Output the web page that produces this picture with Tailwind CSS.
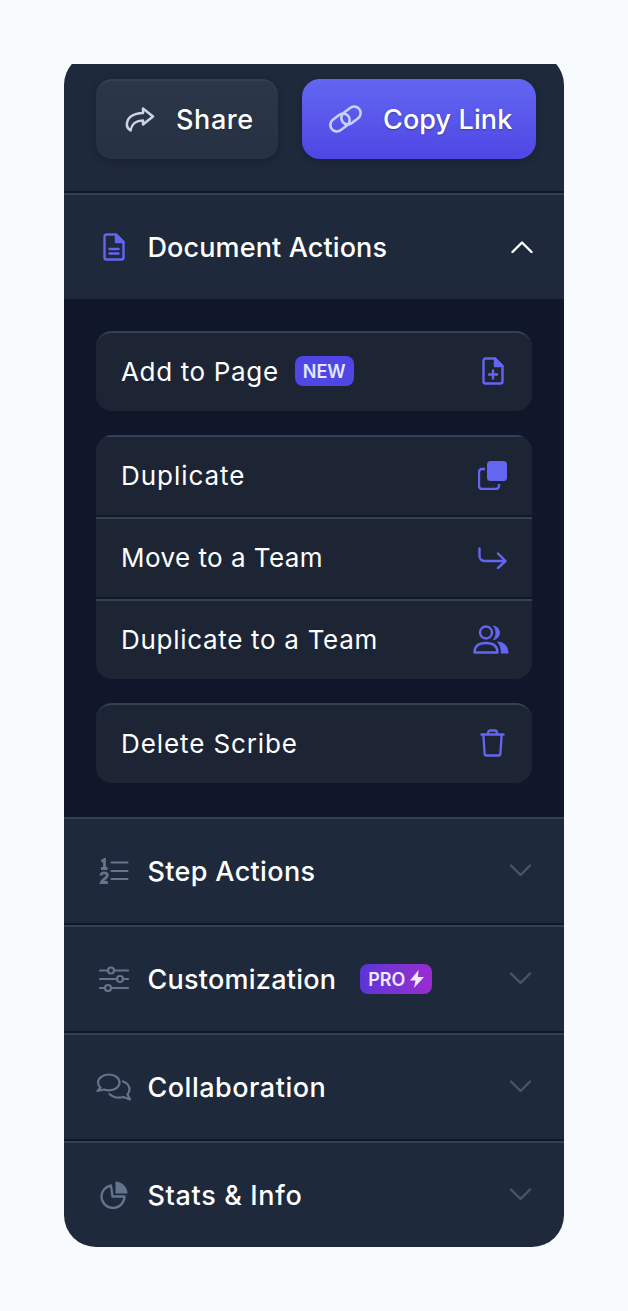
<!DOCTYPE html>
<html>
<head>
<meta charset="utf-8">
<script src="https://cdn.jsdelivr.net/npm/@tailwindcss/browser@4"></script>
</head>
<body class="bg-[#f7fbfe] font-['Inter',sans-serif] text-white antialiased">
<div class="pt-16 pb-16 px-16 h-[1311px]">
  <div class="h-[1183px] overflow-hidden">
    <div class="-mt-[11px] rounded-[32px] bg-[#1e293b] overflow-hidden w-[500px]">
      <div class="h-[138px] pt-[26px] pl-8 pr-7 flex items-start gap-6">
        <button class="w-[182px] h-20 rounded-2xl bg-gradient-to-b from-[#2b3749] to-[#263244] border-t-2 border-[#334155] shadow-[0_2px_6px_rgba(15,23,42,0.5)] flex items-center pl-[29px] gap-[21px] text-[27px] font-medium tracking-[0.6px]">
          <svg class="w-[30px] h-[30px] text-[#cbd5e1]" viewBox="0 0 30 30" fill="none" stroke="currentColor" stroke-width="2.500" stroke-linecap="round" stroke-linejoin="round"><path d="M18 3.500 28 11.500 18 19.500V15.500C11 15.500 7 18 5.500 25.500 3 24 1.500 21 2 18 3 12 9 8.500 18 8z"/></svg>
          <span class="[text-shadow:0_1px_2px_rgba(0,0,0,.3)]">Share</span>
        </button>
        <button class="w-[234px] h-20 rounded-[18px] bg-gradient-to-b from-[#6366f1] to-[#4f46e5] shadow-[0_2px_6px_rgba(15,23,42,0.5)] flex items-center pl-[26px] gap-[20px] text-[27px] font-medium tracking-[0.1px]">
          <svg class="w-[35px] h-[30px] text-[#c7d2fe]" viewBox="0 0 35 30" fill="none" stroke="currentColor" stroke-width="2.600" stroke-linecap="round" stroke-linejoin="round"><rect x="1.500" y="12" width="21" height="13" rx="6.500" transform="rotate(-38 12 18.500)"/><rect x="12.500" y="5" width="21" height="13" rx="6.500" transform="rotate(-38 23 11.500)"/></svg>
          <span class="pt-[2px] [text-shadow:0_1px_2px_rgba(0,0,0,.3)]">Copy Link</span>
        </button>
      </div>

      <div class="border-t-2 border-[#0f172a]"><div class="border-t-2 border-[#334155]">
        <div class="h-[104px] flex items-center pl-[39px] pr-[31px] text-[27px] font-medium tracking-[0.12px]">
          <svg class="w-[22px] h-[28px] text-[#6366f1] mr-[22.500px]" viewBox="0 0 22 28" fill="none" stroke="currentColor" stroke-width="2.400" stroke-linejoin="round" stroke-linecap="round"><path d="M13 1.500H3.500a2 2 0 0 0-2 2v21a2 2 0 0 0 2 2h15a2 2 0 0 0 2-2V9z"/><path d="M13 1.500V9h7.500z" fill="currentColor"/><path d="M6.500 16h9M6.500 20.500h9"/></svg>
          <span class="flex-1 pt-[2px]">Document Actions</span>
          <svg class="w-[22px] h-[12px] text-white" viewBox="0 0 22 12" fill="none" stroke="currentColor" stroke-width="2.400" stroke-linecap="round" stroke-linejoin="round"><path d="M1.500 11L11 1.500 20.500 11"/></svg>
        </div>
      </div></div>

      <div class="bg-[#10172a] h-[518px] pt-8 pl-8 pr-8 flex flex-col gap-6 text-[26px] tracking-[0.65px]">
        <div class="h-20 rounded-2xl bg-[#1d2535] border-t-2 border-[#334155] flex items-center pl-[25px] pr-[28px] pb-[2px]">
          <span>Add to Page</span>
          <span class="ml-4 w-[59px] h-[30px] rounded-lg bg-[#4f46e5] text-[#e0e7ff] text-[18px] font-semibold tracking-normal flex items-center justify-center">NEW</span>
          <svg class="ml-auto w-[22px] h-[28px] text-[#6366f1]" viewBox="0 0 22 28" fill="none" stroke="currentColor" stroke-width="2.400" stroke-linejoin="round" stroke-linecap="round"><path d="M13 1.500H3.500a2 2 0 0 0-2 2v21a2 2 0 0 0 2 2h15a2 2 0 0 0 2-2V9z"/><path d="M13 1.500V9h7.500z" fill="currentColor"/><path d="M11 13.500v8M7 17.500h8"/></svg>
        </div>
        <div class="rounded-2xl bg-[#1d2535] overflow-hidden">
          <div class="h-20 border-t-2 border-[#334155] flex items-center pl-[25px] pr-[25px] pb-[1px]">
            <span class="tracking-[0.95px]">Duplicate</span>
            <svg class="ml-auto w-[29px] h-[29px] text-[#6366f1]" viewBox="0 0 29 29" fill="none"><rect x="9" y="0" width="20" height="20" rx="3.500" fill="currentColor"/><path d="M7 8H4a3 3 0 0 0-3 3v14a3 3 0 0 0 3 3h14a3 3 0 0 0 3-3v-2" stroke="currentColor" stroke-width="2.400"/></svg>
          </div>
          <div class="h-[82px] border-t-2 border-[#0f172a]"><div class="h-full border-t-2 border-[#334155] flex items-center pl-[25px] pr-[25px] pb-[1px]">
            <span class="tracking-[0.45px]">Move to a Team</span>
            <svg class="ml-auto w-[29px] h-[22px] text-[#6366f1]" viewBox="0 0 29 22" fill="none" stroke="currentColor" stroke-width="2.400" stroke-linecap="round" stroke-linejoin="round"><path d="M1.500 1.500V9a5 5 0 0 0 5 5h21M20 6.500l7.500 7.500-7.500 7"/></svg>
          </div></div>
          <div class="h-[82px] border-t-2 border-[#0f172a]"><div class="h-full border-t-2 border-[#334155] flex items-center pl-[25px] pr-[23px] pb-[1px]">
            <span class="tracking-[0.7px]">Duplicate to a Team</span>
            <svg class="ml-auto w-[36px] h-[29px] text-[#6366f1]" viewBox="0 0 36 29" fill="none"><circle cx="13" cy="7.500" r="6" stroke="currentColor" stroke-width="2.400"/><path d="M1.500 27.500C1.500 21 6 18 13 18s11.500 3 11.500 9.500z" stroke="currentColor" stroke-width="2.400" stroke-linejoin="round"/><path d="M20.500 1a6.800 6.800 0 0 1 0 13.500c1.800-2 2.500-4 2.500-6.700S22.300 3 20.500 1z" fill="currentColor" stroke="currentColor"/><path d="M24 16.500c6.500 0 11.500 4 11.500 12H28c0-5-1.500-9-4-12z" fill="currentColor"/></svg>
          </div></div>
        </div>
        <div class="h-20 rounded-2xl bg-[#1d2535] border-t-2 border-[#334155] flex items-center pl-[25px] pr-[27px] pb-[2px]">
          <span class="tracking-[0.9px]">Delete Scribe</span>
          <svg class="ml-auto w-[25px] h-[28px] text-[#6366f1]" viewBox="0 0 26 28" fill="none" preserveAspectRatio="none" stroke="currentColor" stroke-width="2.400" stroke-linecap="round" stroke-linejoin="round"><path d="M1.500 5.500h23M8.500 5V3.500a2 2 0 0 1 2-2h5a2 2 0 0 1 2 2V5M3.500 6l1.300 18.500a2 2 0 0 0 2 2h12.400a2 2 0 0 0 2-2L22.500 6"/></svg>
        </div>
      </div>

      <div class="border-t-2 border-[#334155]">
        <div class="h-[104px] flex items-center pl-[35px] pr-[32px] text-[27px] font-medium tracking-[0.35px]">
          <svg class="w-[30px] h-[26px] text-[#64748b] mr-[18.500px]" viewBox="0 0 30 26" fill="none" stroke="currentColor"><path d="M12.500 4.500h16M12.500 13h16M12.500 21h16" stroke-width="2.200" stroke-linecap="round"/><path d="M2.500 3.500 5.500 1.500V10.500M2 10.500H8.500" stroke-width="2.800"/><path d="M1.800 17.500c.5-3.500 6.500-3.500 6.500 0 0 2.500-4.800 3.500-6 7H8.800" stroke-width="2.800"/></svg>
          <span class="flex-1 pt-[2px]">Step Actions</span>
          <svg class="w-[22px] h-[12px] text-[#475569] -mt-[2px] -translate-x-[0.5px]" viewBox="0 0 22 12" fill="none" stroke="currentColor" stroke-width="2.400" stroke-linecap="round" stroke-linejoin="round"><path d="M1.500 1.500 11 11l9.500-9.500"/></svg>
        </div>
      </div>
      <div class="border-t-2 border-[#0f172a]"><div class="border-t-2 border-[#334155]">
        <div class="h-[104px] flex items-center pl-[35px] pr-[32px] text-[27px] font-medium tracking-[0.25px]">
          <svg class="w-[30px] h-[26px] text-[#64748b] mr-[18.500px]" viewBox="0 0 30 26" fill="none" stroke="currentColor" stroke-width="2.200" stroke-linecap="round"><path d="M1 4.500h8M15 4.500h14M1 13h17M24 13h5M1 22h5M12 22h17"/><circle cx="12" cy="4.500" r="3"/><circle cx="21" cy="13" r="3"/><circle cx="9" cy="22" r="3"/></svg>
          <span class="pt-[2px]">Customization</span>
          <span class="ml-6 w-[72px] h-[30px] rounded-lg bg-gradient-to-r from-[#5b34d6] to-[#9a2bcf] text-[#ede9fe] text-[18px] font-semibold tracking-normal flex items-center justify-center gap-[5px]">PRO<svg class="w-[14px] h-[18px]" viewBox="0 0 14 18" fill="currentColor"><path d="M8.500 0 0 10.500h5.500L4 18l10-11H8z"/></svg></span>
          <svg class="ml-auto w-[22px] h-[12px] text-[#475569] -mt-[2px] -translate-x-[0.5px]" viewBox="0 0 22 12" fill="none" stroke="currentColor" stroke-width="2.400" stroke-linecap="round" stroke-linejoin="round"><path d="M1.500 1.500 11 11l9.500-9.500"/></svg>
        </div>
      </div></div>
      <div class="border-t-2 border-[#0f172a]"><div class="border-t-2 border-[#334155]">
        <div class="h-[104px] flex items-center pl-8 pr-[32px] text-[27px] font-medium tracking-[0.5px]">
          <svg class="w-9 h-[28px] text-[#64748b] mr-[15.500px]" viewBox="0 0 36 28" fill="none" stroke="currentColor" stroke-width="2.200" stroke-linejoin="round" stroke-linecap="round"><path d="M13 1.500c-6 0-11 3.500-11 8 0 2 1 3.800 2.500 5L1.500 18l6.500-1.500c1.500.5 3 .8 5 .8 6 0 10.500-3.300 10.500-7.800S19 1.500 13 1.500z"/><path d="M27 8.500c4 1.500 6.500 4.500 6.500 8 0 2-.8 3.500-2 4.700l2.500 5.300-6.500-2.500c-4.500 1.200-10 .8-14-3"/></svg>
          <span class="flex-1 pt-[2px]">Collaboration</span>
          <svg class="w-[22px] h-[12px] text-[#475569] -mt-[2px] -translate-x-[0.5px]" viewBox="0 0 22 12" fill="none" stroke="currentColor" stroke-width="2.400" stroke-linecap="round" stroke-linejoin="round"><path d="M1.500 1.500 11 11l9.500-9.500"/></svg>
        </div>
      </div></div>
      <div class="border-t-2 border-[#0f172a]"><div class="border-t-2 border-[#334155]">
        <div class="h-[104px] flex items-center pl-[36px] pr-[32px] text-[27px] font-medium tracking-[0.65px]">
          <svg class="w-[28px] h-[28px] text-[#64748b] mr-[19.500px]" viewBox="0 0 28 28" fill="none"><path d="M11 4C5.500 5 1.500 9.500 1.500 15a11.500 11.500 0 0 0 23 0H12.500z" stroke="currentColor" stroke-width="2.300" stroke-linejoin="round" transform="translate(0 0.500)"/><path d="M15.500 0.500c6 0 12 5 12 12H15.500z" fill="currentColor"/></svg>
          <span class="flex-1 pt-[2px]">Stats &amp; Info</span>
          <svg class="w-[22px] h-[12px] text-[#475569] -mt-[2px] -translate-x-[0.5px]" viewBox="0 0 22 12" fill="none" stroke="currentColor" stroke-width="2.400" stroke-linecap="round" stroke-linejoin="round"><path d="M1.500 1.500 11 11l9.500-9.500"/></svg>
        </div>
      </div></div>
    </div>
  </div>
</div>
</body>
</html>
